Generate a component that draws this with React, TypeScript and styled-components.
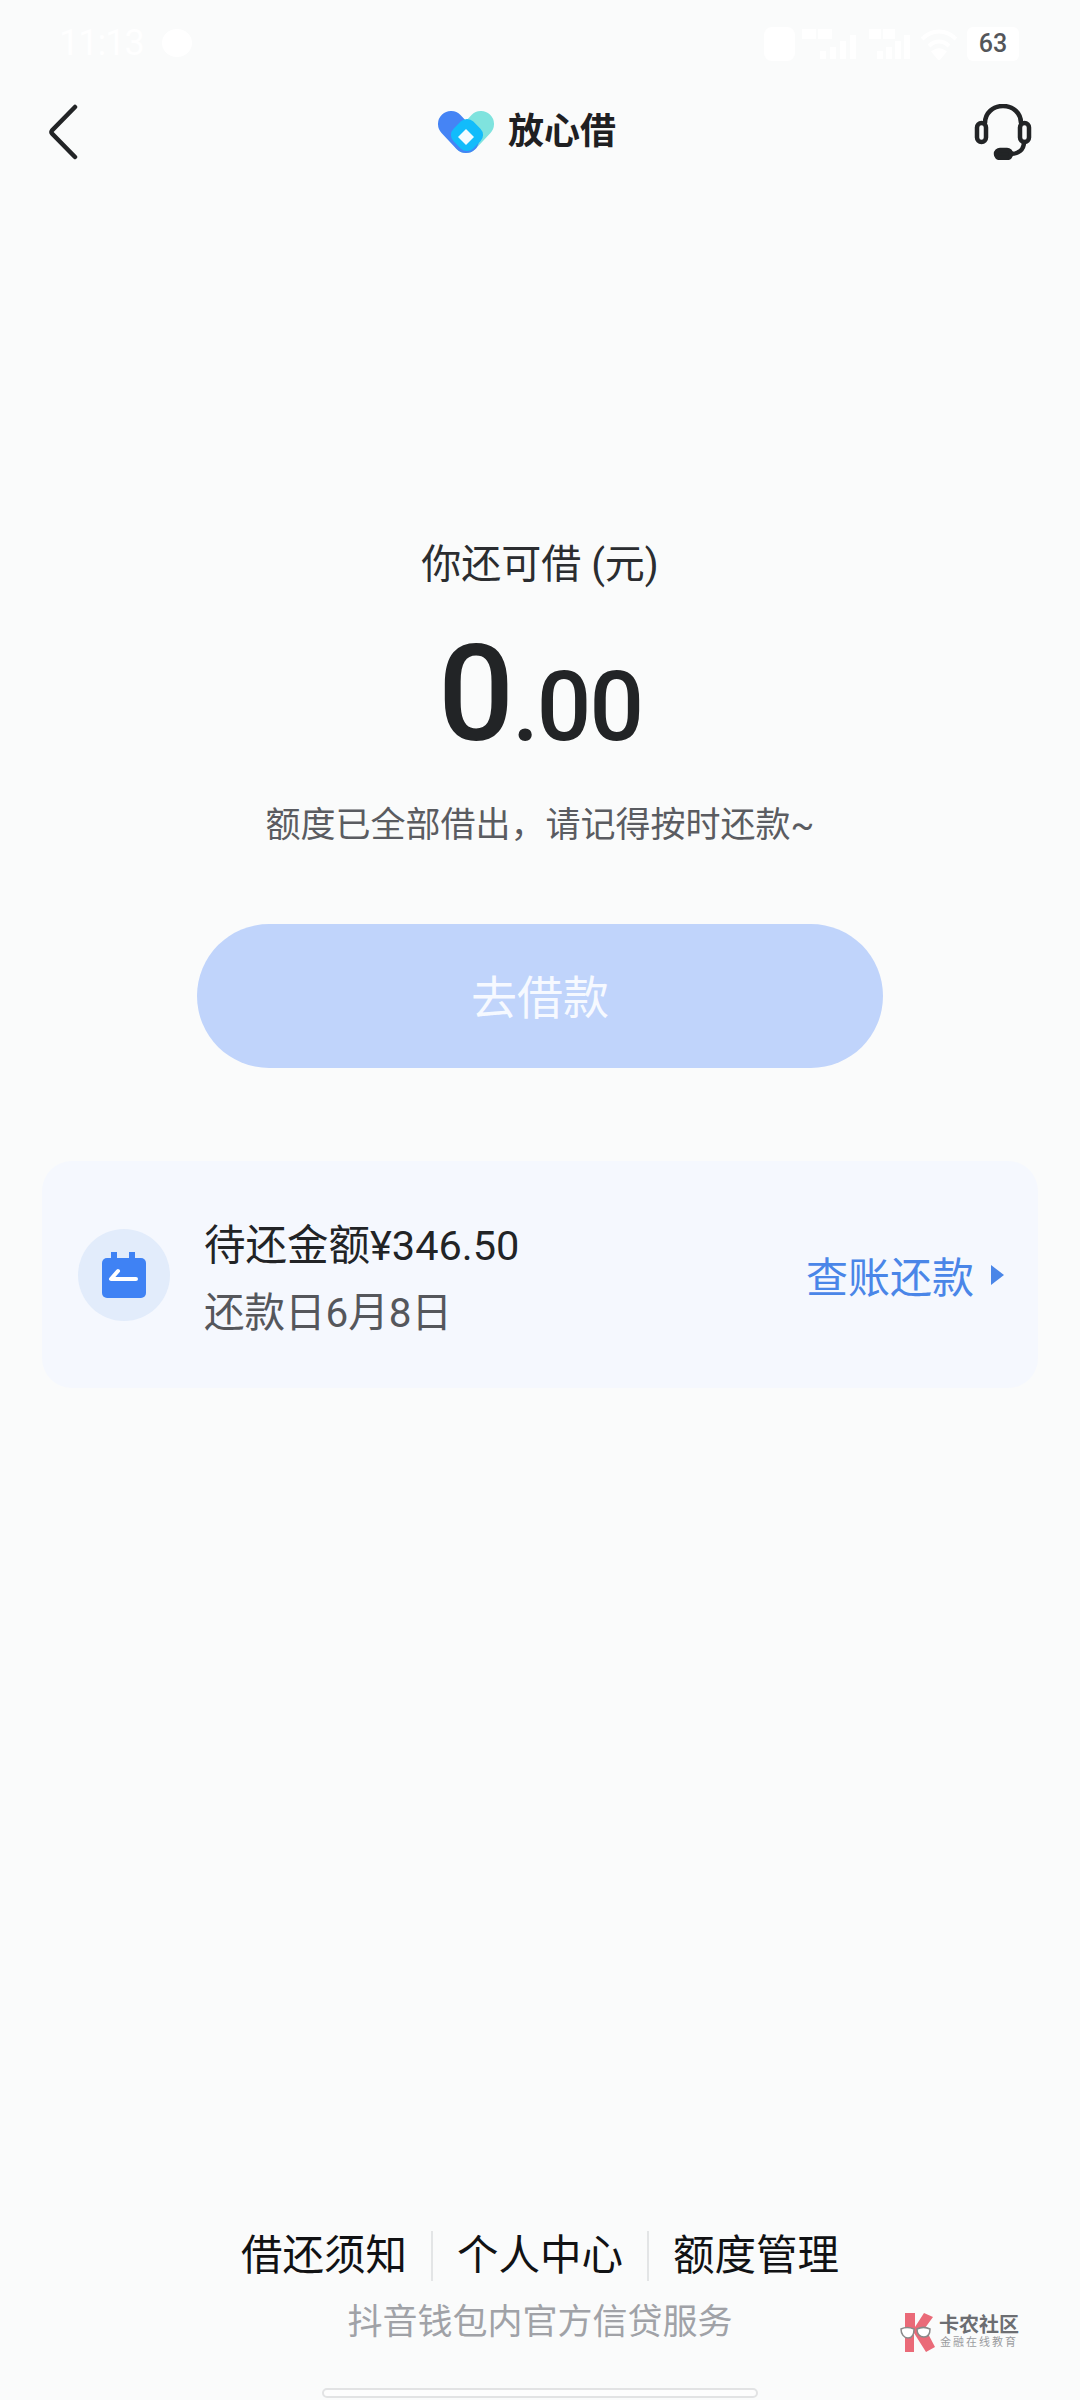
import React from "react";
import styled, { createGlobalStyle } from "styled-components";

const GlobalStyle = createGlobalStyle`
  html, body {
    margin: 0;
    padding: 0;
    background: #fafbfb;
  }
  * {
    box-sizing: border-box;
  }
`;

const Page = styled.div`
  position: relative;
  width: 1080px;
  height: 2400px;
  display: flex;
  flex-direction: column;
  overflow: hidden;
  background: #fafbfb;
  font-family: Roboto, "Noto Sans CJK SC", sans-serif;
  color: #222426;
`;

const StatusBar = styled.div`
  height: 90px;
  padding: 26px 61px 0 59px;
  display: flex;
  align-items: flex-start;
  justify-content: space-between;
`;

const StatusLeft = styled.div`
  display: flex;
  align-items: center;
  gap: 18px;
  height: 34px;
  color: #ffffff;
  font-size: 36px;
  letter-spacing: -1px;
`;

const StatusDot = styled.span`
  width: 30px;
  height: 28px;
  border-radius: 50%;
  background: #ffffff;
`;

const StatusRight = styled.div`
  display: flex;
  align-items: center;
  gap: 5px;
  height: 36px;
`;

const Battery = styled.span`
  margin-left: 4px;
  width: 52px;
  height: 34px;
  border-radius: 6px;
  background: #ffffff;
  color: #54565a;
  font-size: 25px;
  font-weight: 500;
  line-height: 34px;
  text-align: center;
`;

const NavBar = styled.div`
  height: 84px;
  padding: 0 48px;
  display: flex;
  align-items: center;
  justify-content: space-between;
`;

const Brand = styled.div`
  display: flex;
  align-items: center;
  gap: 14px;
`;

const BrandName = styled.span`
  font-size: 36px;
  font-weight: 700;
  line-height: 44px;
  color: #1f2022;
`;

const Hero = styled.div`
  margin-top: 366px;
  display: flex;
  flex-direction: column;
  align-items: center;
`;

const HeroLabel = styled.div`
  font-size: 40px;
  line-height: 50px;
  color: #2b2d30;
`;

const Amount = styled.div`
  margin-top: 32px;
  height: 146px;
  display: flex;
  align-items: baseline;
  line-height: 146px;
  font-weight: 500;
  color: #222426;
`;

const AmountPart = styled.span<{ $size: number; $spacing?: number }>`
  font-size: ${(p) => p.$size}px;
  letter-spacing: ${(p) => p.$spacing ?? 0}px;
`;

const HeroHint = styled.div`
  margin-top: 35px;
  font-size: 35px;
  line-height: 46px;
  color: #5a5c61;
`;

const BorrowButton = styled.div`
  margin-top: 75px;
  width: 686px;
  height: 144px;
  padding-bottom: 4px;
  border-radius: 72px;
  background: #c0d4fb;
  color: #f6f9ff;
  font-size: 46px;
  display: flex;
  align-items: center;
  justify-content: center;
`;

const BillCard = styled.div`
  margin: 93px 42px 0;
  height: 227px;
  padding: 0 34px 0 36px;
  border-radius: 30px;
  background: #f5f8fe;
  display: flex;
  align-items: center;
`;

const BillIcon = styled.div`
  width: 92px;
  height: 92px;
  border-radius: 50%;
  background: #e2ecfb;
  display: flex;
  align-items: center;
  justify-content: center;
`;

const BillText = styled.div`
  margin: 10px 0 0 34px;
  flex: 1;
  display: flex;
  flex-direction: column;
  gap: 19px;
`;

const BillAmount = styled.div`
  font-size: 41.5px;
  line-height: 48px;
  color: #222426;
`;

const BillDate = styled.div`
  font-size: 40.5px;
  line-height: 48px;
  color: #55575c;
`;

const BillAction = styled.div`
  display: flex;
  align-items: center;
  gap: 17px;
  font-size: 42px;
  color: #4a86e8;
`;

const ActionArrow = styled.span`
  width: 0;
  height: 0;
  border-left: 13px solid #4a86e8;
  border-top: 10px solid transparent;
  border-bottom: 10px solid transparent;
`;

const Footer = styled.div`
  margin-top: auto;
  display: flex;
  flex-direction: column;
  align-items: center;
`;

const FooterLinks = styled.div`
  display: flex;
  align-items: center;
`;

const FooterLink = styled.div`
  padding: 0 24px;
  font-size: 41.5px;
  line-height: 50px;
  color: #111214;
  & + & {
    border-left: 2px solid #e3e5e6;
  }
`;

const FooterNote = styled.div`
  margin-top: 19px;
  font-size: 35px;
  line-height: 46px;
  color: #a0a2a7;
`;

const HomeBar = styled.div`
  margin-top: 42px;
  margin-bottom: 2px;
  width: 436px;
  height: 10px;
  border-radius: 5px;
  border: 2px solid #e2e3e4;
  background: #fdfdfd;
`;

const Watermark = styled.div`
  position: absolute;
  left: 900px;
  top: 2312px;
  display: flex;
  align-items: center;
  gap: 3px;
`;

const WatermarkText = styled.div`
  display: flex;
  flex-direction: column;
  align-items: center;
`;

const WatermarkTitle = styled.span`
  font-size: 20px;
  line-height: 22px;
  font-weight: 700;
  color: #6c6e72;
`;

const WatermarkSub = styled.span`
  font-size: 11px;
  line-height: 14px;
  letter-spacing: 2px;
  color: #9a9c9f;
`;

const StatusIcons = () => (
  <StatusRight>
    <svg width="31" height="34" viewBox="0 0 31 34">
      <rect width="31" height="34" rx="8" fill="#ffffff" />
    </svg>
    <svg width="62" height="34" viewBox="0 0 62 34" fill="#ffffff">
      <rect x="2" y="2" width="14" height="10" />
      <rect x="18" y="2" width="14" height="10" />
      <rect x="20" y="24" width="6" height="8" />
      <rect x="30" y="20" width="6" height="12" />
      <rect x="40" y="14" width="6" height="18" />
      <rect x="50" y="8" width="6" height="24" />
    </svg>
    <svg width="48" height="34" viewBox="0 0 48 34" fill="#ffffff">
      <rect x="2" y="2" width="12" height="10" />
      <rect x="16" y="2" width="12" height="10" />
      <rect x="10" y="24" width="6" height="8" />
      <rect x="19" y="20" width="6" height="12" />
      <rect x="28" y="14" width="6" height="18" />
      <rect x="37" y="8" width="6" height="24" />
    </svg>
    <svg width="38" height="32" viewBox="0 0 38 32" fill="none" stroke="#ffffff" strokeWidth="4">
      <path d="M2 11c10-10 24-10 34 0" />
      <path d="M9 18c6-6 14-6 20 0" />
      <path d="M19 30l-5-6c3-2 7-2 10 0z" fill="#ffffff" />
    </svg>
    <Battery>63</Battery>
  </StatusRight>
);

const BackIcon = () => (
  <svg width="32" height="56" viewBox="0 0 32 56" fill="none">
    <path d="M27 3L4 26.5a2.5 2.5 0 0 0 0 3L27 53" stroke="#222426" strokeWidth="4.5" strokeLinecap="round" />
  </svg>
);

const LogoIcon = () => (
  <svg width="56" height="43" viewBox="0 0 56 43" fill="none" strokeLinecap="round">
    <path d="M43 13L28 29" stroke="#7fe3de" strokeWidth="26" />
    <path d="M13 13L28 29" stroke="#4584f5" strokeWidth="26" />
    <rect x="15" y="10" width="28" height="28" rx="9" fill="#12bcfb" transform="rotate(45 29 24)" />
    <path d="M28 18l8 8-8 8-8-8z" fill="#f3fbff" />
  </svg>
);

const HeadsetIcon = () => (
  <svg width="58" height="56" viewBox="0 0 58 56" fill="none" stroke="#222426" strokeWidth="4.5" strokeLinecap="round">
    <path d="M11 19C11 9 19 2 29 2s18 7 18 17" />
    <rect x="3" y="19" width="9" height="19" rx="4.5" />
    <rect x="46" y="19" width="9" height="19" rx="4.5" />
    <path d="M50 38c0 8-6 12-14 12" />
    <rect x="22" y="46" width="15" height="8" rx="4" fill="#222426" />
  </svg>
);

const CalendarIcon = () => (
  <svg width="44" height="46" viewBox="0 0 44 46">
    <rect x="9" y="0" width="6" height="10" fill="#3f82f4" />
    <rect x="27" y="0" width="6" height="10" fill="#3f82f4" />
    <rect x="0" y="6" width="44" height="40" rx="5" fill="#3f82f4" />
    <path d="M16 19l-7 8h25" fill="none" stroke="#ffffff" strokeWidth="4" strokeLinecap="round" strokeLinejoin="round" />
  </svg>
);

const WatermarkLogo = () => (
  <svg width="36" height="40" viewBox="0 0 36 40">
    <path d="M5 1h10v14L24 1l9 4-8 11 10 19-9 5-12-19v19H5z" fill="#ea6a78" />
    <path d="M1 17c4-2 8-2 13 0 0 6-2 9-6 9s-7-4-7-9z" fill="#ffffff" stroke="#8a8a8a" strokeWidth="1.5" />
    <path d="M17 17c4-2 9-2 13 0 0 5-2 8-6 8s-7-3-7-8z" fill="#ffffff" stroke="#8a8a8a" strokeWidth="1.5" />
  </svg>
);

export default function App() {
  return (
    <Page>
      <GlobalStyle />
      <StatusBar>
        <StatusLeft>
          11:13
          <StatusDot />
        </StatusLeft>
        <StatusIcons />
      </StatusBar>
      <NavBar>
        <BackIcon />
        <Brand>
          <LogoIcon />
          <BrandName>放心借</BrandName>
        </Brand>
        <HeadsetIcon />
      </NavBar>
      <Hero>
        <HeroLabel>你还可借 (元)</HeroLabel>
        <Amount>
          <AmountPart $size={134} $spacing={-2}>0</AmountPart>
          <AmountPart $size={96} $spacing={-2}>.00</AmountPart>
        </Amount>
        <HeroHint>额度已全部借出，请记得按时还款~</HeroHint>
        <BorrowButton>去借款</BorrowButton>
      </Hero>
      <BillCard>
        <BillIcon>
          <CalendarIcon />
        </BillIcon>
        <BillText>
          <BillAmount>待还金额¥346.50</BillAmount>
          <BillDate>还款日6月8日</BillDate>
        </BillText>
        <BillAction>
          查账还款
          <ActionArrow />
        </BillAction>
      </BillCard>
      <Footer>
        <FooterLinks>
          <FooterLink>借还须知</FooterLink>
          <FooterLink>个人中心</FooterLink>
          <FooterLink>额度管理</FooterLink>
        </FooterLinks>
        <FooterNote>抖音钱包内官方信贷服务</FooterNote>
        <HomeBar />
      </Footer>
      <Watermark>
        <WatermarkLogo />
        <WatermarkText>
          <WatermarkTitle>卡农社区</WatermarkTitle>
          <WatermarkSub>金融在线教育</WatermarkSub>
        </WatermarkText>
      </Watermark>
    </Page>
  );
}
